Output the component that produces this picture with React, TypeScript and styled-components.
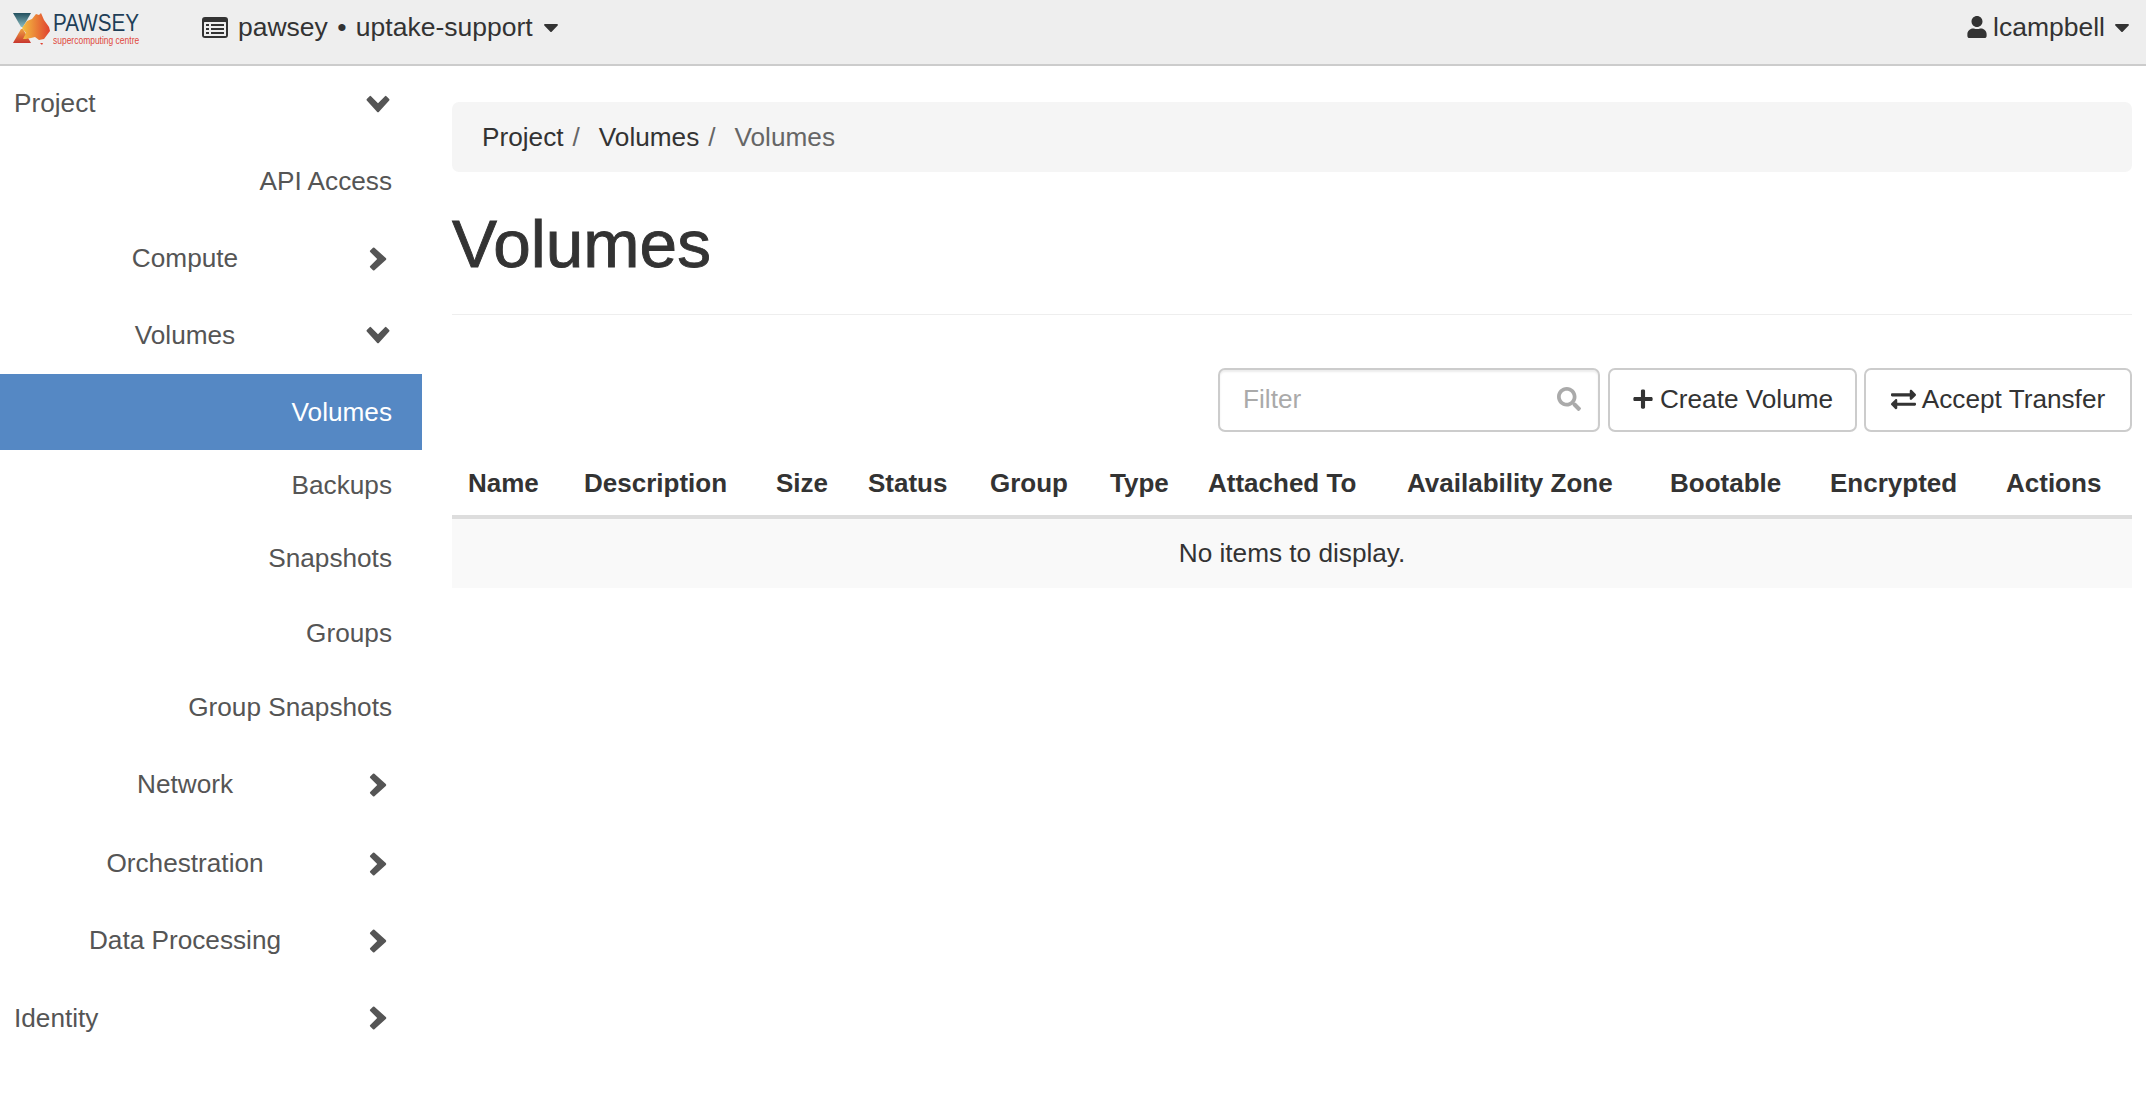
import styled, { createGlobalStyle } from "styled-components";
import { FaCaretDown, FaExchangeAlt, FaPlus, FaSearch, FaUser } from "react-icons/fa";

const GlobalStyle = createGlobalStyle`
  html, body {
    margin: 0;
    padding: 0;
    background: #fff;
  }
  body {
    font-family: "Liberation Sans", Arial, sans-serif;
    font-size: 26.2px;
    color: #333;
  }
  * {
    box-sizing: border-box;
  }
`;

const Page = styled.div`
  width: 2146px;
  height: 1112px;
  overflow: hidden;
`;

const TopBar = styled.header`
  height: 66px;
  background: #eee;
  border-bottom: 2px solid #ccc;
  display: flex;
  align-items: flex-start;
  justify-content: space-between;
  padding: 12px 12px 0 12px;
`;

const TopLeft = styled.div`
  display: flex;
  align-items: flex-start;
`;

const Logo = styled.div`
  display: flex;
  width: 190px;
  gap: 1px;
`;

const LogoWords = styled.div`
  display: flex;
  flex-direction: column;
  padding-top: 1px;
`;

const LogoName = styled.span`
  font-size: 24px;
  line-height: 20px;
  color: #1f3f58;
  transform: scaleX(0.86);
  transform-origin: left;
  white-space: nowrap;
`;

const LogoTag = styled.span`
  font-size: 11px;
  line-height: 12px;
  margin-top: 1px;
  color: #e0483c;
  transform: scaleX(0.77);
  transform-origin: left;
  white-space: nowrap;
`;

const Dropdown = styled.div<{ $gap?: number; $spread?: number }>`
  display: flex;
  align-items: center;
  height: 30px;
  gap: ${(p) => p.$gap ?? 10}px;
  font-size: 26.5px;
  word-spacing: ${(p) => p.$spread ?? 0}px;
  white-space: nowrap;
  color: #333;
`;

const ProjectCaret = styled(FaCaretDown)`
  margin-left: -4px;
`;

const ListIcon = styled.svg`
  width: 26px;
  height: 21px;
`;

const Layout = styled.div`
  display: flex;
`;

const Sidebar = styled.nav`
  width: 422px;
  flex: none;
  display: flex;
  flex-direction: column;
  color: #555;
`;

const TopRow = styled.div<{ $h: number }>`
  height: ${(p) => p.$h}px;
  display: flex;
  align-items: center;
  justify-content: space-between;
  padding: 0 32px 0 14px;
`;

const GroupRow = styled.div<{ $h: number }>`
  height: ${(p) => p.$h}px;
  display: grid;
  grid-template-columns: 370px 20px;
  align-items: center;
  text-align: center;
`;

const ChevronCell = styled.span`
  display: block;
  width: 24px;
  margin-left: -4px;
`;

const ChevronIcon = styled.svg<{ $open?: boolean }>`
  width: 24px;
  height: 24px;
  display: block;
  color: #555;
  transform: rotate(${(p) => (p.$open ? 90 : 0)}deg);
`;

const LeafRow = styled.div<{ $h: number; $active?: boolean }>`
  height: ${(p) => p.$h}px;
  display: flex;
  align-items: center;
  justify-content: flex-end;
  padding-right: 30px;
  background: ${(p) => (p.$active ? "#5588c4" : "transparent")};
  color: ${(p) => (p.$active ? "#fff" : "#555")};
`;

const Main = styled.main`
  flex: 1;
  padding: 36px 14px 0 30px;
`;

const Breadcrumb = styled.ol`
  list-style: none;
  margin: 0;
  height: 70px;
  padding: 0 30px;
  display: flex;
  align-items: center;
  background: #f5f5f5;
  border-radius: 7px;
`;

const Crumb = styled.li<{ $current?: boolean }>`
  color: ${(p) => (p.$current ? "#666" : "#333")};
  white-space: pre;
`;

const Separator = styled.span`
  padding: 0 19px 0 9px;
  color: #666;
`;

const PageHeader = styled.div`
  height: 143px;
  display: flex;
  align-items: center;
  padding-top: 2px;
  border-bottom: 1px solid #eee;
`;

const Title = styled.h1`
  margin: 0;
  font-size: 67.5px;
  font-weight: 500;
  line-height: 1.1;
  color: #333;
  -webkit-text-stroke: 0.9px #333;
`;

const Toolbar = styled.div`
  display: flex;
  justify-content: flex-end;
  margin-top: 53px;
  height: 64px;
`;

const FilterBox = styled.div`
  width: 382px;
  margin-right: 8px;
  padding: 0 17px 2px 23px;
  display: flex;
  align-items: center;
  justify-content: space-between;
  border: 2px solid #ccc;
  border-radius: 7px;
  box-shadow: inset 0 2px 2px rgba(0, 0, 0, 0.075);
  color: #aaa;
`;

const Button = styled.button<{ $w: number }>`
  width: ${(p) => p.$w}px;
  margin-left: ${(p) => (p.$w > 255 ? 7 : 0)}px;
  display: flex;
  align-items: center;
  justify-content: center;
  gap: 6px;
  padding: 0 0 2px;
  font: inherit;
  color: #333;
  background: #fff;
  border: 2px solid #ccc;
  border-radius: 7px;
`;

const Table = styled.table`
  width: 100%;
  margin-top: 3px;
  border-collapse: collapse;
  table-layout: fixed;
`;

const HeadCell = styled.th`
  height: 82px;
  padding: 16px 0 0 16px;
  text-align: left;
  font-size: 26px;
  font-weight: 700;
  color: #333;
  white-space: nowrap;
  border-bottom: 4px solid #ddd;
`;

const EmptyCell = styled.td`
  height: 71px;
  padding: 0;
  text-align: center;
  background: #f9f9f9;
  color: #333;
`;

const columns = [
  { name: "Name", width: 116 },
  { name: "Description", width: 192 },
  { name: "Size", width: 92 },
  { name: "Status", width: 122 },
  { name: "Group", width: 120 },
  { name: "Type", width: 98 },
  { name: "Attached To", width: 199 },
  { name: "Availability Zone", width: 263 },
  { name: "Bootable", width: 160 },
  { name: "Encrypted", width: 176 },
  { name: "Actions", width: 142 },
];

const Chevron = ({ open }: { open?: boolean }) => (
  <ChevronIcon $open={open} viewBox="0 0 24 24">
    <path
      d="M8.4 0.8L19.8 11a1.4 1.4 0 0 1 0 2L8.4 23.2a1 1 0 0 1-1.4 0L4.2 20.4a1 1 0 0 1 0-1.4L11.2 12L4.2 5a1 1 0 0 1 0-1.4L7 0.8a1 1 0 0 1 1.4 0z"
      fill="currentColor"
    />
  </ChevronIcon>
);

const ProjectIcon = () => (
  <ListIcon viewBox="0 0 26 21">
    <rect x="0" y="0" width="26" height="21" rx="3" fill="#333" />
    <rect x="2" y="5" width="22" height="14" rx="0.5" fill="#eee" />
    <path d="M4 7h3v2H4zM4 11h3v2H4zM4 15h3v2H4z" fill="#333" />
    <path d="M9 7h13v2H9zM9 11h13v2H9zM9 15h13v2H9z" fill="#333" />
  </ListIcon>
);

const PawseyMark = () => (
  <svg width="40" height="34" viewBox="0 0 40 34">
    <defs>
      <linearGradient id="hourTop" x1="0" y1="0" x2="0" y2="1">
        <stop offset="0" stopColor="#23505f" />
        <stop offset="1" stopColor="#8bbcc0" />
      </linearGradient>
      <linearGradient id="hourBottom" x1="0" y1="0" x2="0" y2="1">
        <stop offset="0" stopColor="#f0a040" />
        <stop offset="1" stopColor="#c8362e" />
      </linearGradient>
      <linearGradient id="oz" x1="0" y1="0" x2="1" y2="0">
        <stop offset="0" stopColor="#f4c040" />
        <stop offset="1" stopColor="#e0402f" />
      </linearGradient>
    </defs>
    <path d="M1 1h18l-8 14h-2z" fill="url(#hourTop)" />
    <path d="M9 17h2l8 14H1z" fill="url(#hourBottom)" />
    <path
      d="M10 16l5-7 5-2 4-5 3 1 2-2 3 7 5 7 1 4-6 8-5 1-4-3-4 1-5 1-3 0 3-6-4-5z"
      fill="url(#oz)"
    />
    <path d="M28 31h3l-1 2z" fill="#e0402f" />
  </svg>
);

const App = () => {
  return (
    <Page>
      <GlobalStyle />
      <TopBar>
        <TopLeft>
          <Logo>
            <PawseyMark />
            <LogoWords>
              <LogoName>PAWSEY</LogoName>
              <LogoTag>supercomputing centre</LogoTag>
            </LogoWords>
          </Logo>
          <Dropdown $spread={2}>
            <ProjectIcon />
            <span>pawsey • uptake-support</span>
            <ProjectCaret size={24} />
          </Dropdown>
        </TopLeft>
        <Dropdown $gap={5}>
          <FaUser size={22} />
          <span>lcampbell</span>
          <FaCaretDown size={24} />
        </Dropdown>
      </TopBar>
      <Layout>
        <Sidebar>
          <TopRow $h={75}>
            Project
            <Chevron open />
          </TopRow>
          <LeafRow $h={80}>API Access</LeafRow>
          <GroupRow $h={75}>
            <span>Compute</span>
            <ChevronCell>
              <Chevron />
            </ChevronCell>
          </GroupRow>
          <GroupRow $h={78}>
            <span>Volumes</span>
            <ChevronCell>
              <Chevron open />
            </ChevronCell>
          </GroupRow>
          <LeafRow $h={76} $active>
            Volumes
          </LeafRow>
          <LeafRow $h={71}>Backups</LeafRow>
          <LeafRow $h={75}>Snapshots</LeafRow>
          <LeafRow $h={74}>Groups</LeafRow>
          <LeafRow $h={74}>Group Snapshots</LeafRow>
          <GroupRow $h={81}>
            <span>Network</span>
            <ChevronCell>
              <Chevron />
            </ChevronCell>
          </GroupRow>
          <GroupRow $h={77}>
            <span>Orchestration</span>
            <ChevronCell>
              <Chevron />
            </ChevronCell>
          </GroupRow>
          <GroupRow $h={77}>
            <span>Data Processing</span>
            <ChevronCell>
              <Chevron />
            </ChevronCell>
          </GroupRow>
          <TopRow $h={78}>
            Identity
            <Chevron />
          </TopRow>
        </Sidebar>
        <Main>
          <Breadcrumb>
            <Crumb>
              Project<Separator>/</Separator>
            </Crumb>
            <Crumb>
              Volumes<Separator>/</Separator>
            </Crumb>
            <Crumb $current>Volumes</Crumb>
          </Breadcrumb>
          <PageHeader>
            <Title>Volumes</Title>
          </PageHeader>
          <Toolbar>
            <FilterBox>
              Filter
              <FaSearch size={24} />
            </FilterBox>
            <Button $w={249}>
              <FaPlus size={22} />
              Create Volume
            </Button>
            <Button $w={268}>
              <FaExchangeAlt size={25} />
              Accept Transfer
            </Button>
          </Toolbar>
          <Table>
            <colgroup>
              {columns.map((c) => (
                <col key={c.name} width={c.width} />
              ))}
            </colgroup>
            <thead>
              <tr>
                {columns.map((c) => (
                  <HeadCell key={c.name}>{c.name}</HeadCell>
                ))}
              </tr>
            </thead>
            <tbody>
              <tr>
                <EmptyCell colSpan={columns.length}>No items to display.</EmptyCell>
              </tr>
            </tbody>
          </Table>
        </Main>
      </Layout>
    </Page>
  );
};

export default App;
